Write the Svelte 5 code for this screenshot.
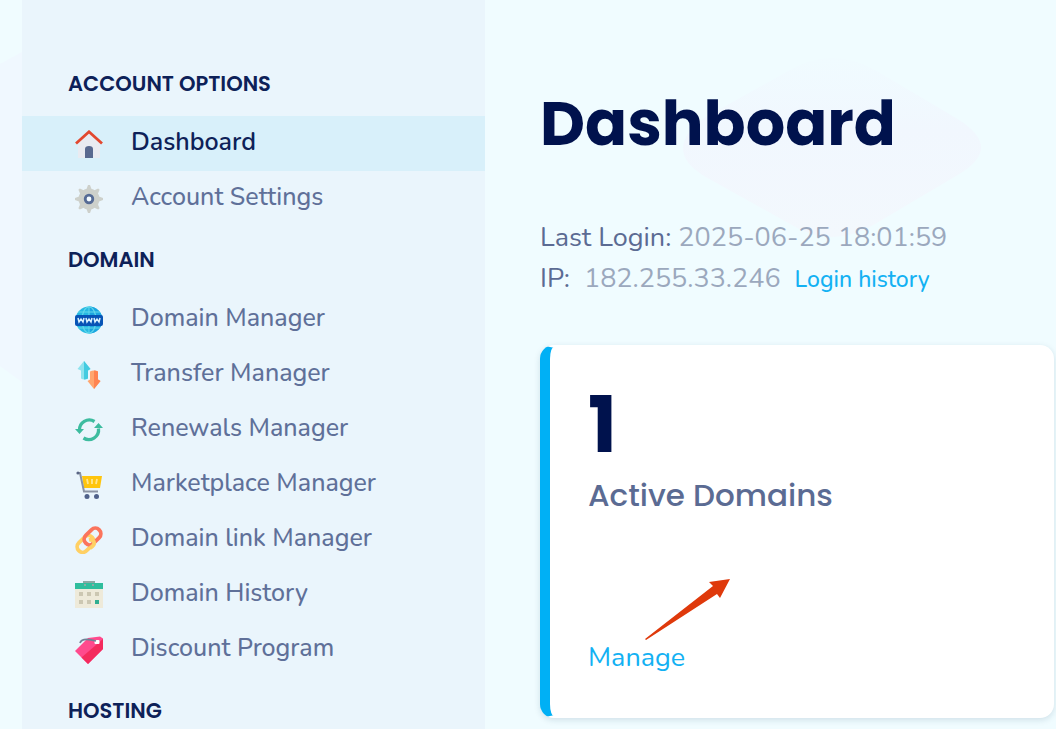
<script>
    const groups = [
        {
            title: 'ACCOUNT OPTIONS',
            items: [
                { label: 'Dashboard', icon: 'home', active: true },
                { label: 'Account Settings', icon: 'gear' }
            ]
        },
        {
            title: 'DOMAIN',
            items: [
                { label: 'Domain Manager', icon: 'globe' },
                { label: 'Transfer Manager', icon: 'transfer' },
                { label: 'Renewals Manager', icon: 'renew' },
                { label: 'Marketplace Manager', icon: 'cart' },
                { label: 'Domain link Manager', icon: 'link' },
                { label: 'Domain History', icon: 'calendar' },
                { label: 'Discount Program', icon: 'tag' }
            ]
        },
        { title: 'HOSTING', items: [] }
    ]

    const login = { date: '2025-06-25 18:01:59', ip: '182.255.33.246' }
    const teeth = [0, 45, 90, 135]
</script>

{#snippet icon(name)}
    <svg class="icon" viewBox="0 0 28 28" fill="none" aria-hidden="true">
        {#if name === 'home'}
            <path d="M3 13 14 3l11 10v15H3z" fill="#e9ebf1" />
            <path d="M10 28V19q0-3 4-3t4 3v9z" fill="#59698f" />
            <path d="M1 13.5 14 1.8l13 11.7" stroke="#e2482f" stroke-width="2.8" />
        {:else if name === 'gear'}
            <circle cx="14" cy="14" r="10.5" fill="#cdd0cb" />
            {#each teeth as angle}
                <path d="M11.5 4l1.500-4h2l1.500 4v20l-1.500 4h-2l-1.500-4z" fill="#cdd0cb" transform="rotate({angle} 14 14)" />
            {/each}
            <circle cx="14" cy="14" r="3.8" fill="#f3fbff" stroke="#566b95" stroke-width="2.8" />
        {:else if name === 'globe'}
            <circle cx="14" cy="14" r="13.5" fill="#27b9e2" />
            <path d="M14 .5a13.5 13.5 0 0 1 0 27z" fill="#1ca6e0" />
            <path d="M14 0v28M3 6h22M3 22h22" stroke="#63d9ea" />
            <ellipse cx="14" cy="14" rx="7" ry="13" stroke="#63d9ea" stroke-width="1.2" />
            <rect y="9" width="28" height="11" rx="2" fill="#0754b6" />
            <path d="M3 12l1 4 2-3 2 3 1-4M11 12l1 4 2-3 2 3 1-4M19 12l1 4 2-3 2 3 1-4" stroke="#d9f1ff" stroke-width="1.5" />
        {:else if name === 'transfer'}
            <path d="M9 0l6.5 8-2.5 1.500v8q-4 2-7 0V9.500L2.500 8z" fill="#8fe3ee" />
            <path d="M9 0l6.5 8-2.5 1.500v8q-2 1-4 1z" fill="#43cbe0" />
            <path d="M19 28l-6.5-8 2.500-1.500v-8q4-2 8 0v8l2.500 1.500z" fill="#ffa66e" />
            <path d="M19 28V9.500q2 0 4 1v8l2.500 1.500z" fill="#ff8450" />
        {:else if name === 'renew'}
            <path d="M4.5 14.5A9.8 9.8 0 0 1 19.5 5.5M23.5 12.500A9.8 9.8 0 0 1 8.500 22" stroke="#3dbc9f" stroke-width="3.3" />
            <path d="M0 13h9l-4.5 5zM19 12h9L23.5 7z" fill="#3dbc9f" />
        {:else if name === 'cart'}
            <path d="M7 5h20l-2 12H9z" fill="#ffc50d" />
            <path d="M12 8l1 5M17 8v5M22 8l-1 5" stroke="#ffe690" stroke-width="1.8" />
            <path d="M2 2h3l4 18.5h14" stroke="#8b93a3" stroke-width="2" />
            <circle cx="3" cy="2" r="1.6" fill="#596584" />
            <circle cx="12" cy="25.5" r="2.5" fill="#50618a" />
            <circle cx="21.5" cy="25.5" r="2.5" fill="#50618a" />
        {:else if name === 'link'}
            <rect x="1" y="12.5" width="19" height="11" rx="5.5" transform="rotate(-45 10.5 18)" stroke="#ffd064" stroke-width="3.8" />
            <rect x="8" y="5" width="19" height="11" rx="5.5" transform="rotate(-45 17.5 10.5)" stroke="#fb745c" stroke-width="3.8" />
            <path d="M14 14q4-1 5 2t-4 6" stroke="#ffd064" stroke-width="3.8" />
        {:else if name === 'calendar'}
            <path d="M0 7h28v20H0z" fill="#eeeada" />
            <path d="M0 2h28v6H0z" fill="#2fbd9d" />
            <path d="M8 1h12M9 4h2m6 0h2" stroke="#8caaa5" stroke-width="2" />
            <path d="M4 13h4m4 0h4m4 0h4M4 21h4m4 0h4" stroke="#ccc7b2" stroke-width="4" />
            <path d="M20 21h4" stroke="#2fae91" stroke-width="4" />
        {:else}
            <path d="M0 15 13 2l12-1.5 3 2V13L13 28z" fill="#ff4a8d" />
            <path d="M28 3v10L13 28l-6.5-6.5z" fill="#f42b5d" />
            <rect x="19.5" y="4" width="5" height="4" rx="1" fill="#fff" />
            <path d="M21 5Q7 1 5 7" stroke="#708196" stroke-width="1.8" />
        {/if}
    </svg>
{/snippet}

<div class="page">
    <svg class="backdrop" viewBox="0 0 1056 729" preserveAspectRatio="xMinYMin slice" aria-hidden="true">
        <defs>
            <linearGradient id="fade" x2="0" y2="1">
                <stop stop-color="#f0fbff" />
                <stop offset="0.4" stop-color="#f1f7fe" />
                <stop offset="1" stop-color="#f3f8fd" />
            </linearGradient>
        </defs>
        <path d="M0 64L22 52V382L0 366z" fill="#f0f8ff" />
        <path d="M790 70Q832 46 875 70L956 118Q1006 148 956 176L875 224Q832 250 790 224L704 176Q662 150 704 118z" fill="url(#fade)" />
    </svg>

    <nav class="sidebar">
        {#each groups as group}
            <h2>{group.title}</h2>
            {#if group.items.length}
                <ul>
                    {#each group.items as item}
                        <li>
                            <a href="#{item.icon}" class:active={item.active}>
                                {@render icon(item.icon)}
                                <span>{item.label}</span>
                            </a>
                        </li>
                    {/each}
                </ul>
            {/if}
        {/each}
    </nav>

    <main>
        <h1>Dashboard</h1>
        <div class="login">
            <p>Last Login: <span>{login.date}</span></p>
            <p>IP: <span class="ip">{login.ip}</span> <a href="#history">Login history</a></p>
        </div>
        <section class="card">
            <strong>1</strong>
            <h3>Active Domains</h3>
            <a href="#manage">Manage</a>
            <svg class="arrow" viewBox="0 0 86 62" aria-hidden="true">
                <path d="M0 60L68 7 64 3 85 0 75 19 72 15 1 61z" fill="#df390b" />
            </svg>
        </section>
    </main>
</div>

<style>
    :global(body) {
        margin: 0;
        background: #f0fcff;
    }

    .page {
        position: relative;
        display: grid;
        grid-template-columns: 463px minmax(0, 1fr);
        box-sizing: border-box;
        min-height: 100vh;
        padding-left: 22px;
        overflow: hidden;
        color: #5b6b93;
        font-family: Nunito, 'Noto Sans', sans-serif;
    }

    .backdrop {
        position: absolute;
        top: 0;
        left: 0;
        width: 100%;
        height: 100%;
    }

    .sidebar,
    main {
        position: relative;
    }

    .sidebar {
        padding-top: 50px;
        background: #eaf5fc;
    }

    h1,
    h2,
    h3,
    p,
    ul {
        margin: 0;
        padding: 0;
    }

    h1,
    h2,
    h3,
    strong {
        font-family: Poppins, Inter, sans-serif;
    }

    h2 {
        padding: 23px 46px 0;
        color: #0d2158;
        font-size: 21px;
        font-weight: 600;
        line-height: 22px;
    }

    ul {
        margin-top: 21px;
        list-style: none;
    }

    a {
        color: #13b1f3;
        text-decoration: none;
    }

    li a {
        display: flex;
        align-items: center;
        gap: 28px;
        height: 55px;
        padding-left: 53px;
        color: #5f7099;
        font-size: 25px;
        font-weight: 500;
    }

    li span {
        padding-bottom: 4px;
        line-height: 32px;
    }

    li a.active {
        background: #d8f0fa;
        color: #0d2158;
        font-weight: 600;
    }

    .icon {
        width: 28px;
        height: 28px;
    }

    main {
        padding: 84px 2px 10px 55px;
    }

    h1 {
        color: #00124d;
        font-size: 62px;
        font-weight: 700;
        line-height: 80px;
    }

    .login {
        padding: 53px 0 45px;
        font-size: 27px;
        line-height: 41px;
    }

    .login span {
        color: #9ba8bd;
    }

    .login .ip {
        margin: 0 7px;
    }

    .login a {
        font-size: 23px;
        font-weight: 500;
    }

    .card {
        position: relative;
        display: flex;
        flex-direction: column;
        align-items: flex-start;
        box-sizing: border-box;
        min-height: 373px;
        padding: 38px;
        border: 2px solid #fff;
        border-left: 10px solid #00b0f5;
        border-radius: 14px;
        background: #fff;
        box-shadow: 0 2px 6px #17406226;
    }

    strong {
        color: #00124d;
        font-size: 77px;
        font-weight: 700;
        line-height: 80px;
    }

    h3 {
        margin-top: 10px;
        font-size: 31px;
        font-weight: 500;
        line-height: 40px;
    }

    .card a {
        margin-top: auto;
        font-size: 27px;
        line-height: 40px;
    }

    .arrow {
        position: absolute;
        bottom: 75px;
        left: 95px;
        width: 86px;
        height: 62px;
    }
</style>
